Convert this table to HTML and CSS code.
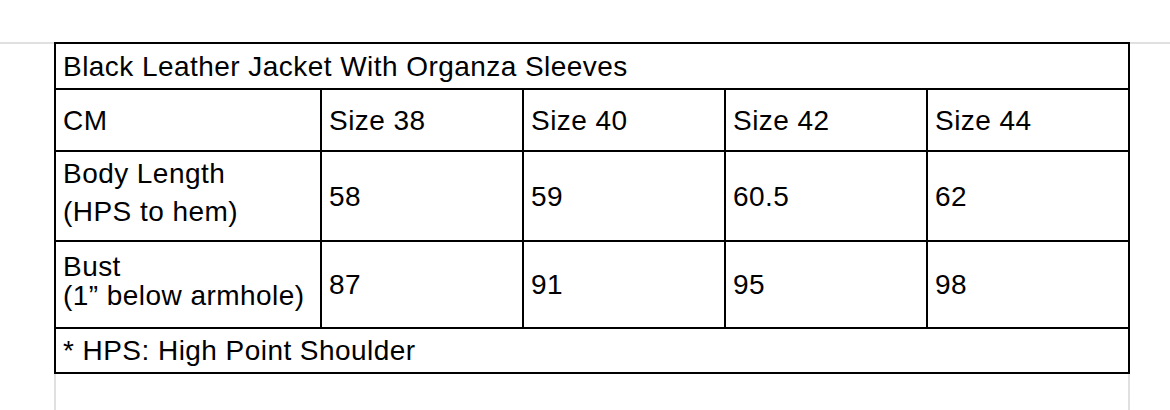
FILE: index.html
```html
<!DOCTYPE html>
<html lang="en">
<head>
<meta charset="utf-8">
<title>Black Leather Jacket With Organza Sleeves – Size Chart</title>
<link rel="stylesheet" href="styles.css">
</head>
<body>
<div class="rule">
  <div class="page">
    <table class="chart">
      <colgroup>
        <col class="col-label">
        <col class="col-size">
        <col class="col-size">
        <col class="col-size">
        <col class="col-size">
      </colgroup>
      <tr class="row-title"><td colspan="5">Black Leather Jacket With Organza Sleeves</td></tr>
      <tr class="row-head">
        <td>CM</td><td>Size 38</td><td>Size 40</td><td>Size 42</td><td>Size 44</td>
      </tr>
      <tr class="row-body">
        <td class="label">Body Length<br>(HPS to hem)</td><td>58</td><td>59</td><td>60.5</td><td>62</td>
      </tr>
      <tr class="row-bust">
        <td class="label">Bust<br>(1” below armhole)</td><td>87</td><td>91</td><td>95</td><td>98</td>
      </tr>
      <tr class="row-note"><td colspan="5">* HPS: High Point Shoulder</td></tr>
    </table>
  </div>
</div>
</body>
</html>
```
FILE: styles.css
```css
html, body {
  margin: 0;
  padding: 0;
  background: #fff;
}

body {
  font-family: "Liberation Sans", Arial, Helvetica, sans-serif;
  color: #000;
  height: 410px;
  overflow: hidden;
}

.rule {
  margin-top: 42px;
  border-top: 2px solid #e0e0e0;
  height: 366px;
}

.page {
  margin: -2px 0 0 54px;
  width: 1076px;
  box-sizing: border-box;
  border-left: 2px solid #e0e0e0;
  border-right: 2px solid #e0e0e0;
  height: 368px;
}

.chart {
  margin-left: -2px;
  width: 1076px;
  table-layout: fixed;
  border-collapse: separate;
  border-spacing: 0;
  border-top: 2px solid #000;
  border-left: 2px solid #000;
  background: #fff;
  font-size: 28px;
  line-height: 29px;
  letter-spacing: 0.45px;
}

.col-label { width: 266px; }
.col-size { width: 202px; }

.chart td {
  box-sizing: border-box;
  border-right: 2px solid #000;
  border-bottom: 2px solid #000;
  padding: 0 0 0 7px;
  vertical-align: middle;
  white-space: nowrap;
}

.row-title { height: 46px; }
.row-head { height: 62px; }
.row-body { height: 90px; }
.row-bust { height: 87px; }
.row-note { height: 45px; }

.chart td.label { vertical-align: top; }
.row-body td.label { padding-top: 3px; line-height: 38px; }
.row-bust td.label { padding-top: 10px; }
```
